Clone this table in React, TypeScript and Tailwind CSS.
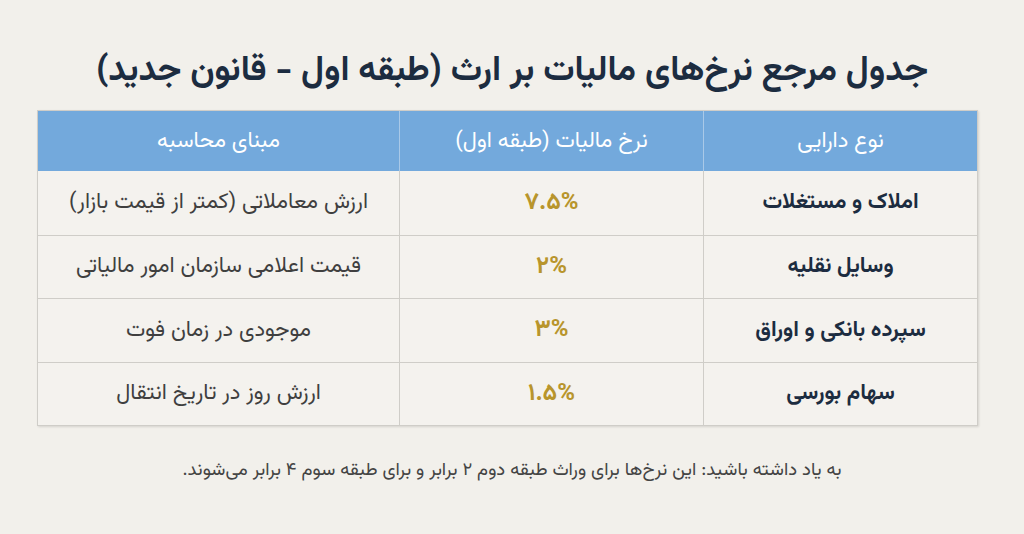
import React from "react";

const rows = [
  { asset: "املاک و مستغلات", rate: "۷.۵%", basis: "ارزش معاملاتی (کمتر از قیمت بازار)" },
  { asset: "وسایل نقلیه", rate: "۲%", basis: "قیمت اعلامی سازمان امور مالیاتی" },
  { asset: "سپرده بانکی و اوراق", rate: "۳%", basis: "موجودی در زمان فوت" },
  { asset: "سهام بورسی", rate: "۱.۵%", basis: "ارزش روز در تاریخ انتقال" },
];

const App = () => {
  return (
    <div
      dir="rtl"
      className="w-[1024px] h-[534px] bg-[#f2f0eb] flex flex-col items-center"
      style={{ fontFamily: '"Vazirmatn", "Noto Sans Arabic", "DejaVu Sans", sans-serif' }}
    >
      <h1 className="mt-[48px] h-[48px] flex items-center text-[35px] font-bold text-[#1c2c40]">
        جدول مرجع نرخ‌های مالیات بر ارث (طبقه اول - قانون جدید)
      </h1>

      {/* table */}
      <div className="mt-[14px] mr-[9px] w-[941px] border border-[#cfcdc8] shadow-[1px_1px_2px_rgba(0,0,0,0.12)]">
        <div className="grid grid-cols-[274px_304px_1fr] h-[60px] bg-[#73a9dc] text-white text-[22px]">
          <div className="flex items-center justify-center border-l border-[#a9c9e8]">نوع دارایی</div>
          <div className="flex items-center justify-center border-l border-[#a9c9e8]">نرخ مالیات (طبقه اول)</div>
          <div className="flex items-center justify-center">مبنای محاسبه</div>
        </div>
        {rows.map((r, i) => (
          <div
            key={i}
            className={
              "grid grid-cols-[274px_304px_1fr] h-[63.5px] bg-[#f4f2ee] " +
              (i > 0 ? "border-t border-[#cfcdc8]" : "")
            }
          >
            <div className="flex items-center justify-center border-l border-[#cfcdc8] text-[22px] font-bold text-[#1c2c40]">
              {r.asset}
            </div>
            <div className="flex items-center justify-center border-l border-[#cfcdc8] text-[24px] font-bold text-[#b8952c]">
              {r.rate}
            </div>
            <div className="flex items-center justify-center text-[22px] text-[#3f3f3f]">{r.basis}</div>
          </div>
        ))}
      </div>

      <p className="mt-[31px] text-[18.5px] text-[#444]">
        به یاد داشته باشید: این نرخ‌ها برای وراث طبقه دوم ۲ برابر و برای طبقه سوم ۴ برابر می‌شوند.
      </p>
    </div>
  );
};

export default App;
